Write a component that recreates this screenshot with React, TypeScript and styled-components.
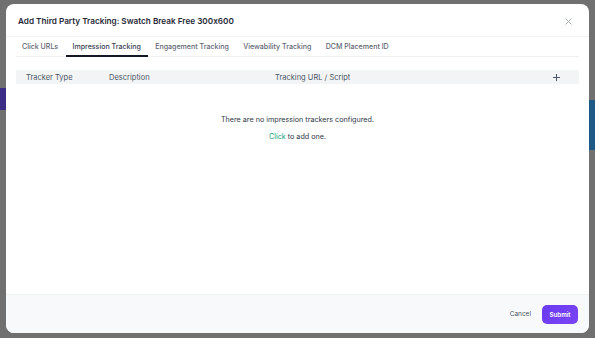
import React from "react";
import styled, { createGlobalStyle } from "styled-components";

const GlobalStyle = createGlobalStyle`
  html, body {
    margin: 0;
    padding: 0;
    height: 100%;
  }
  body {
    font-family: Inter, "Noto Sans", "Liberation Sans", sans-serif;
    font-feature-settings: "calt" 0;
    -webkit-font-smoothing: antialiased;
  }
  * {
    box-sizing: border-box;
  }
`;

const tabs = [
  "Click URLs",
  "Impression Tracking",
  "Engagement Tracking",
  "Viewability Tracking",
  "DCM Placement ID",
];

const Backdrop = styled.div`
  width: 595px;
  height: 338px;
  padding: 4px 6px 5px 6px;
  background:
    linear-gradient(#3b2d86, #3b2d86) 0 88px / 6px 22px no-repeat,
    linear-gradient(#1e5a86, #1e5a86) 589px 100px / 6px 50px no-repeat,
    #707070;
  display: flex;
`;

const Modal = styled.div`
  flex: 1;
  display: flex;
  flex-direction: column;
  background: #fff;
  border-radius: 8px;
  overflow: hidden;
`;

const Header = styled.div`
  height: 33px;
  display: flex;
  align-items: center;
  justify-content: space-between;
  padding: 2px 17px 0 12px;
  border-bottom: 1px solid #f0f1f3;
`;

const Title = styled.h1`
  margin: 0;
  font-size: 8.2px;
  font-weight: 600;
  color: #1f2937;
`;

const Close = styled.button`
  border: 0;
  background: none;
  padding: 0;
  display: flex;
  color: #9ca3af;
`;

const Body = styled.div`
  flex: 1;
  padding: 0 10px;
  display: flex;
  flex-direction: column;
`;

const TabBar = styled.div`
  display: flex;
  height: 20px;
  border-bottom: 1px solid #eef0f2;
`;

const Tab = styled.div<{ $active?: boolean }>`
  padding: 1px 7px 0;
  margin-right: 0.4px;
  display: flex;
  align-items: center;
  font-size: 7.05px;
  font-weight: 500;
  color: ${(p) => (p.$active ? "#374151" : "#5f6673")};
  border-bottom: 2px solid ${(p) => (p.$active ? "#111827" : "transparent")};
  margin-bottom: -1px;
  &:first-child {
    padding-left: 6px;
  }
`;

const Table = styled.div`
  margin-top: 13px;
`;

const HeadRow = styled.div`
  display: grid;
  grid-template-columns: 83px 166px 1fr 46px;
  align-items: center;
  height: 14px;
  background: #f3f4f6;
  padding-left: 10px;
  font-size: 7.5px;
  color: #4b5563;
`;

const PlusCell = styled.div`
  display: flex;
  justify-content: center;
  color: #4b5563;
`;

const Empty = styled.div`
  margin-top: 31px;
  display: flex;
  flex-direction: column;
  align-items: center;
  gap: 8px;
  font-size: 7.2px;
  color: #2f3744;
`;

const Link = styled.span`
  color: #0e9f7a;
`;

const Footer = styled.div`
  height: 39px;
  background: #f8f9fa;
  border-top: 1px solid #eff0f2;
  display: flex;
  align-items: center;
  justify-content: flex-end;
  gap: 11px;
  padding: 0 11px;
`;

const CancelButton = styled.button`
  border: 0;
  background: none;
  padding: 0;
  font-family: inherit;
  font-size: 6.5px;
  color: #4b5563;
`;

const SubmitButton = styled.button`
  border: 0;
  width: 36px;
  height: 19px;
  border-radius: 5px;
  background: linear-gradient(135deg, #6a3bf2, #7a44f5);
  color: #fff;
  font-family: inherit;
  font-size: 6.2px;
  font-weight: 600;
  padding: 0;
`;

export default function App() {
  return (
    <>
      <GlobalStyle />
      <Backdrop>
        <Modal>
          <Header>
            <Title>Add Third Party Tracking: Swatch Break Free 300x600</Title>
            <Close aria-label="Close">
              <svg width="7" height="7" viewBox="0 0 7 7" fill="none" stroke="currentColor" strokeWidth="0.9">
                <path d="M0.5 0.5l6 6M6.5 0.5l-6 6" />
              </svg>
            </Close>
          </Header>
          <Body>
            <TabBar>
              {tabs.map((t) => (
                <Tab key={t} $active={t === "Impression Tracking"}>
                  {t}
                </Tab>
              ))}
            </TabBar>
            <Table>
              <HeadRow>
                <div>Tracker Type</div>
                <div>Description</div>
                <div>Tracking URL / Script</div>
                <PlusCell>
                  <svg width="7" height="7" viewBox="0 0 7 7" fill="none" stroke="currentColor" strokeWidth="1">
                    <path d="M3.5 0v7M0 3.5h7" />
                  </svg>
                </PlusCell>
              </HeadRow>
              <Empty>
                <div>There are no impression trackers configured.</div>
                <div>
                  <Link>Click</Link> to add one.
                </div>
              </Empty>
            </Table>
          </Body>
          <Footer>
            <CancelButton>Cancel</CancelButton>
            <SubmitButton>Submit</SubmitButton>
          </Footer>
        </Modal>
      </Backdrop>
    </>
  );
}
